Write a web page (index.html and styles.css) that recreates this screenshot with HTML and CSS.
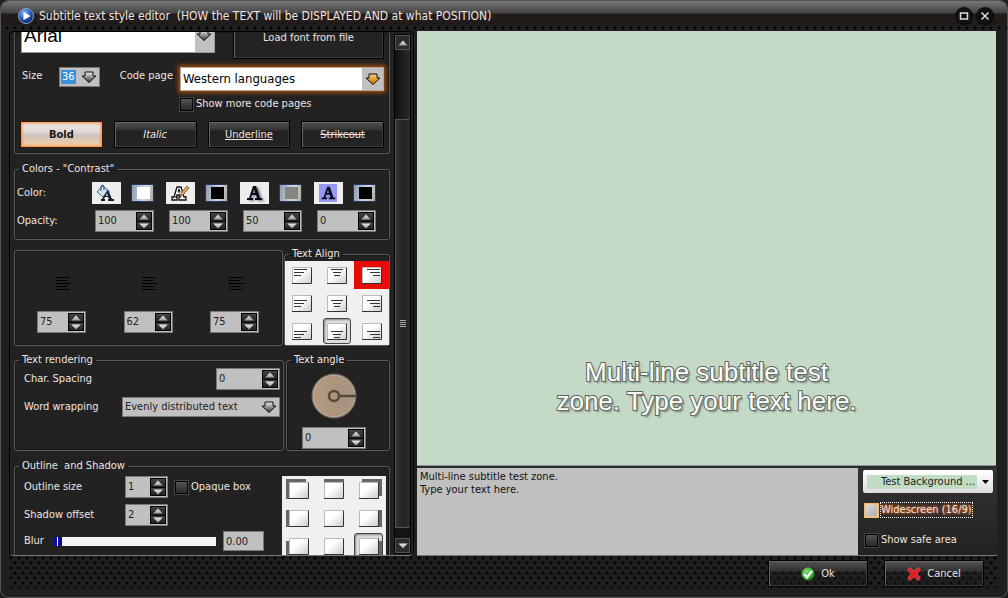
FILE: index.html
```html
<!DOCTYPE html>
<html lang="en">
<head>
<meta charset="utf-8">
<title>Subtitle text style editor</title>
<link rel="stylesheet" href="styles.css">
</head>
<body>
<svg class="defs" aria-hidden="true">
  <defs>
    <linearGradient id="gray" x1="0" y1="0" x2="0" y2="1"><stop offset="0" stop-color="#eee"/><stop offset="1" stop-color="#333"/></linearGradient>
    <linearGradient id="gold" x1="0" y1="0" x2="0" y2="1"><stop offset="0" stop-color="#ffd27a"/><stop offset="1" stop-color="#c46c00"/></linearGradient>
    <linearGradient id="paper" x1="0" y1="0" x2="1" y2="1"><stop offset="0.4" stop-color="#fff"/><stop offset="1" stop-color="#ccc"/></linearGradient>
    <linearGradient id="silver" x1="0" y1="0" x2="0" y2="1"><stop offset="0" stop-color="#eee"/><stop offset="1" stop-color="#999"/></linearGradient>
    <radialGradient id="blue" cx="0.4" cy="0.3" r="0.7"><stop offset="0" stop-color="#8fc0ff"/><stop offset="0.6" stop-color="#2456c0"/><stop offset="1" stop-color="#0a2370"/></radialGradient>
    <radialGradient id="green" cx="0.4" cy="0.3" r="0.7"><stop offset="0" stop-color="#7fe26b"/><stop offset="1" stop-color="#118a18"/></radialGradient>
  </defs>
  <symbol id="arrow" viewBox="0 0 16 12"><path d="M4 1h8v4h3L8 11.5 1 5h3z" fill="url(#gray)" stroke="#111"/></symbol>
  <symbol id="arrow-gold" viewBox="0 0 16 12"><path d="M4 1h8v4h3L8 11.5 1 5h3z" fill="url(#gold)" stroke="#111"/></symbol>
  <symbol id="tri-up" viewBox="0 0 12 7"><path d="M6 0.500L11.500 6.500H0.500z" fill="url(#silver)"/></symbol>
  <symbol id="tri-down" viewBox="0 0 12 7"><path d="M6 6.500L11.500 0.500H0.500z" fill="url(#silver)"/></symbol>
  <symbol id="page" viewBox="0 0 20 17"><path d="M0.500 16V0.500H19" fill="none" stroke="#bbb"/><rect x="1" y="1" width="18" height="15" fill="url(#paper)"/><path d="M0 16.500h19.500V0.500" fill="none" stroke="#333"/></symbol>
  <symbol id="lines-left" viewBox="0 0 14 7"><path d="M0 0.500h13M0 3.500h10M0 6.500h7" stroke="#333"/></symbol>
  <symbol id="lines-center" viewBox="0 0 14 7"><path d="M1 0.500h12M3 3.500h8M4 6.500h6" stroke="#333"/></symbol>
  <symbol id="lines-right" viewBox="0 0 14 7"><path d="M1 0.500h13M4 3.500h10M7 6.500h7" stroke="#333"/></symbol>
  <symbol id="margin" viewBox="0 0 20 16"><path d="M4 2.500h14M4 5.500h11M4 8.500h15M4 11.500h11M4 14.500h14" stroke="#000"/></symbol>
  <symbol id="fill-a" viewBox="0 0 20 18"><path d="M6 2l6 4-5 7-6-5z" fill="#d5e2ef" stroke="#456a8d"/><path d="M5 7V2q2-2 3 0v4" fill="none" stroke="#2d4d6c"/><path d="M11 5q3 1 3 4l-4-2z" fill="#5e9ad0"/><path d="M12 6l4 9h2v2h-6v-2h1l-1-2H9l-1 2h1v2H5v-2h1l4-6zM10 12h2l-1-3z" fill="#151d28" fill-rule="evenodd"/></symbol>
  <symbol id="outline-a" viewBox="0 0 20 18"><path d="M7 3h4l3 10h2v3H9v-3h1v-2H7l-1 2h1v3H2v-3h2z" fill="#fff" stroke="#111" stroke-width="1.300"/><path d="M8 8l1-3 1 3z" fill="#fff" stroke="#111"/><path d="M17 2l2 2-6 7-3 2 1-4z" fill="#dca467" stroke="#7c4925" stroke-width="0.800"/></symbol>
  <symbol id="solid-a" viewBox="0 0 20 18"><path d="M9 2h3l4 12h2v2h-7v-2h2l-1-3H8l-1 3h2v2H3v-2h2zM9 9h2l-1-4z" fill="#080818" fill-rule="evenodd"/></symbol>
</svg>

<div class="window">
  <header class="titlebar">
    <svg class="logo" viewBox="0 0 16 16"><circle cx="8" cy="8" r="7.500" fill="url(#blue)" stroke="#8ab"/><path d="M5.500 4l7 4-7 4z" fill="#fff"/></svg>
    <h1>Subtitle text style editor&nbsp; (HOW the TEXT will be DISPLAYED AND at what POSITION)</h1>
    <button class="round" aria-label="Maximize"><svg viewBox="0 0 16 16"><rect x="4.500" y="5" width="7" height="6" fill="none" stroke="#ddd" stroke-width="1.500"/></svg></button>
    <button class="round" aria-label="Close"><svg viewBox="0 0 16 16"><path d="M4.500 4.500l7 7M11.500 4.500l-7 7" stroke="#ddd" stroke-width="1.500"/></svg></button>
  </header>

  <main class="content">
    <section class="options">
      <div class="groups">
        <div class="group font-group">
          <div class="row font-row">
            <div class="select font-select"><select aria-label="Font"><option>Arial</option></select><svg><use href="#arrow"/></svg></div>
            <button class="btn load">Load font from file</button>
          </div>
          <div class="row size-row">
            <label for="size">Size</label>
            <div class="select size-select"><select id="size"><option>36</option></select><span class="picked">36</span><svg><use href="#arrow"/></svg></div>
            <label class="code-label" for="code">Code page</label>
            <div class="select code-select"><select id="code"><option>Western languages</option></select><svg><use href="#arrow-gold"/></svg></div>
          </div>
          <label class="check more-row"><input type="checkbox">Show more code pages</label>
          <div class="styles-row">
            <button class="btn bold">Bold</button>
            <button class="btn italic">Italic</button>
            <button class="btn underline">Underline</button>
            <button class="btn strike">Strikeout</button>
          </div>
        </div>

        <fieldset class="group colors">
          <legend>Colors - "Contrast"</legend>
          <div class="color-grid">
            <span>Color:</span>
            <div class="cell"><button class="tile" aria-label="Fill"><svg><use href="#fill-a"/></svg></button><button class="swatch" aria-label="Fill color"><i class="white"></i></button></div>
            <div class="cell"><button class="tile" aria-label="Outline"><svg><use href="#outline-a"/></svg></button><button class="swatch" aria-label="Outline color"><i class="black"></i></button></div>
            <div class="cell"><button class="tile shadow" aria-label="Shadow"><svg><use href="#solid-a"/></svg></button><button class="swatch" aria-label="Shadow color"><i class="mid"></i></button></div>
            <div class="cell"><button class="tile box" aria-label="Box"><svg><use href="#solid-a"/></svg></button><button class="swatch" aria-label="Box color"><i class="black"></i></button></div>
            <span>Opacity:</span>
            <div class="spin"><input aria-label="Fill opacity" value="100"><span class="steps"><button aria-label="Up"><svg><use href="#tri-up"/></svg></button><button aria-label="Down"><svg><use href="#tri-down"/></svg></button></span></div>
            <div class="spin"><input aria-label="Outline opacity" value="100"><span class="steps"><button aria-label="Up"><svg><use href="#tri-up"/></svg></button><button aria-label="Down"><svg><use href="#tri-down"/></svg></button></span></div>
            <div class="spin"><input aria-label="Shadow opacity" value="50"><span class="steps"><button aria-label="Up"><svg><use href="#tri-up"/></svg></button><button aria-label="Down"><svg><use href="#tri-down"/></svg></button></span></div>
            <div class="spin"><input aria-label="Box opacity" value="0"><span class="steps"><button aria-label="Up"><svg><use href="#tri-up"/></svg></button><button aria-label="Down"><svg><use href="#tri-down"/></svg></button></span></div>
          </div>
        </fieldset>

        <div class="pair align-pair">
          <div class="group margins">
            <div class="margin-item"><svg><use href="#margin"/></svg><div class="spin"><input aria-label="Left margin" value="75"><span class="steps"><button aria-label="Up"><svg><use href="#tri-up"/></svg></button><button aria-label="Down"><svg><use href="#tri-down"/></svg></button></span></div></div>
            <div class="margin-item"><svg><use href="#margin"/></svg><div class="spin"><input aria-label="Vertical margin" value="62"><span class="steps"><button aria-label="Up"><svg><use href="#tri-up"/></svg></button><button aria-label="Down"><svg><use href="#tri-down"/></svg></button></span></div></div>
            <div class="margin-item"><svg><use href="#margin"/></svg><div class="spin"><input aria-label="Right margin" value="75"><span class="steps"><button aria-label="Up"><svg><use href="#tri-up"/></svg></button><button aria-label="Down"><svg><use href="#tri-down"/></svg></button></span></div></div>
          </div>
          <fieldset class="group align">
            <legend>Text Align</legend>
            <div class="nine">
              <button aria-label="Top left"><svg viewBox="0 0 20 17"><use href="#page" width="20" height="17"/><use href="#lines-left" x="2" y="2" width="14" height="7"/></svg></button>
              <button aria-label="Top center"><svg viewBox="0 0 20 17"><use href="#page" width="20" height="17"/><use href="#lines-center" x="3" y="2" width="14" height="7"/></svg></button>
              <button class="hot" aria-label="Top right"><svg viewBox="0 0 20 17"><use href="#page" width="20" height="17"/><use href="#lines-right" x="4" y="2" width="14" height="7"/></svg></button>
              <button aria-label="Middle left"><svg viewBox="0 0 20 17"><use href="#page" width="20" height="17"/><use href="#lines-left" x="2" y="5" width="14" height="7"/></svg></button>
              <button aria-label="Middle center"><svg viewBox="0 0 20 17"><use href="#page" width="20" height="17"/><use href="#lines-center" x="3" y="5" width="14" height="7"/></svg></button>
              <button aria-label="Middle right"><svg viewBox="0 0 20 17"><use href="#page" width="20" height="17"/><use href="#lines-right" x="4" y="5" width="14" height="7"/></svg></button>
              <button aria-label="Bottom left"><svg viewBox="0 0 20 17"><use href="#page" width="20" height="17"/><use href="#lines-left" x="2" y="8" width="14" height="7"/></svg></button>
              <button class="pressed" aria-label="Bottom center"><svg viewBox="0 0 20 17"><use href="#page" width="20" height="17"/><use href="#lines-center" x="3" y="8" width="14" height="7"/></svg></button>
              <button aria-label="Bottom right"><svg viewBox="0 0 20 17"><use href="#page" width="20" height="17"/><use href="#lines-right" x="4" y="8" width="14" height="7"/></svg></button>
            </div>
          </fieldset>
        </div>

        <div class="pair render-pair">
          <fieldset class="group rendering">
            <legend>Text rendering</legend>
            <div class="field"><label for="spacing">Char. Spacing</label><div class="spin"><input id="spacing" value="0"><span class="steps"><button aria-label="Up"><svg><use href="#tri-up"/></svg></button><button aria-label="Down"><svg><use href="#tri-down"/></svg></button></span></div></div>
            <div class="field"><label for="wrap">Word wrapping</label><div class="select wrap-select"><select id="wrap"><option>Evenly distributed text</option></select><svg><use href="#arrow"/></svg></div></div>
          </fieldset>
          <fieldset class="group angle">
            <legend>Text angle</legend>
            <svg class="dial" viewBox="0 0 46 46"><defs><linearGradient id="tan"><stop offset="0" stop-color="#b59a80"/><stop offset="1" stop-color="#a3917f"/></linearGradient></defs><circle cx="23" cy="23" r="22" fill="url(#tan)" stroke="#77695c"/><circle cx="23" cy="23" r="20.500" fill="none" stroke="#c8b29c" stroke-width="0.600"/><circle cx="23" cy="23" r="5" fill="none" stroke="#54483d" stroke-width="2.500"/><path d="M28 23h17" stroke="#54483d" stroke-width="2.500"/></svg>
            <div class="spin"><input aria-label="Text angle" value="0"><span class="steps"><button aria-label="Up"><svg><use href="#tri-up"/></svg></button><button aria-label="Down"><svg><use href="#tri-down"/></svg></button></span></div>
          </fieldset>
        </div>

        <fieldset class="group outline">
          <legend>Outline&nbsp; and Shadow</legend>
          <div class="outline-body">
            <div class="outline-fields">
              <div class="row"><label class="wide" for="osize">Outline size</label><div class="spin"><input id="osize" value="1"><span class="steps"><button aria-label="Up"><svg><use href="#tri-up"/></svg></button><button aria-label="Down"><svg><use href="#tri-down"/></svg></button></span></div><label class="check"><input type="checkbox">Opaque box</label></div>
              <div class="row"><label class="wide" for="soff">Shadow offset</label><div class="spin"><input id="soff" value="2"><span class="steps"><button aria-label="Up"><svg><use href="#tri-up"/></svg></button><button aria-label="Down"><svg><use href="#tri-down"/></svg></button></span></div></div>
              <div class="row blur-row"><label for="blur">Blur</label><input class="slider" id="blur" type="range" min="0" max="10" value="0"><input class="amount" aria-label="Blur amount" value="0.00"></div>
            </div>
            <div class="nine shadow-grid">
              <button aria-label="Shadow top left"><svg viewBox="-3 -3 26 23"><path d="M-3-3h20v4H0v16h-3z" fill="#666"/><use href="#page" width="20" height="17"/></svg></button>
              <button aria-label="Shadow top"><svg viewBox="-3 -3 26 23"><path d="M0-3h20v5H0z" fill="#666"/><use href="#page" width="20" height="17"/></svg></button>
              <button aria-label="Shadow top right"><svg viewBox="-3 -3 26 23"><path d="M3-3h20v17h-4V1H3z" fill="#666"/><use href="#page" width="20" height="17"/></svg></button>
              <button aria-label="Shadow left"><svg viewBox="-3 -3 26 23"><path d="M-3 0h4v17h-4z" fill="#666"/><use href="#page" width="20" height="17"/></svg></button>
              <button aria-label="No shadow"><svg viewBox="-3 -3 26 23"><use href="#page" width="20" height="17"/></svg></button>
              <button aria-label="Shadow right"><svg viewBox="-3 -3 26 23"><path d="M19 0h4v17h-4z" fill="#666"/><use href="#page" width="20" height="17"/></svg></button>
              <button aria-label="Shadow bottom left"><svg viewBox="-3 -3 26 23"><path d="M-3 3h4v13h16v4H-3z" fill="#666"/><use href="#page" width="20" height="17"/></svg></button>
              <button aria-label="Shadow bottom"><svg viewBox="-3 -3 26 23"><path d="M0 16h20v4H0z" fill="#666"/><use href="#page" width="20" height="17"/></svg></button>
              <button class="pressed" aria-label="Shadow bottom right"><svg viewBox="-3 -3 26 23"><path d="M19 3h4v17H3v-4h16z" fill="#666"/><use href="#page" width="20" height="17"/></svg></button>
            </div>
          </div>
        </fieldset>
      </div>
      <div class="scrollbar">
        <button aria-label="Scroll up"><svg><use href="#tri-up"/></svg></button>
        <span class="track"></span>
        <span class="thumb"><i></i></span>
        <button aria-label="Scroll down"><svg><use href="#tri-down"/></svg></button>
      </div>
    </section>

    <section class="preview">
      <div class="screen"><p>Multi-line subtitle test<br>zone. Type your text here.</p></div>
      <div class="lower">
        <textarea aria-label="Subtitle text">Multi-line subtitle test zone.
Type your text here.</textarea>
        <div class="side">
          <button class="background"><span>Test Background ...</span><svg viewBox="0 0 7 4"><path d="M0 0h7L3.500 4z" fill="#000"/></svg></button>
          <label class="check wide-check"><input type="checkbox"><span>Widescreen (16/9)</span></label>
          <label class="check"><input type="checkbox">Show safe area</label>
        </div>
      </div>
    </section>
  </main>

  <footer class="footer">
    <button class="btn action"><svg viewBox="0 0 14 14"><circle cx="7" cy="7" r="6.500" fill="url(#green)"/><path d="M3 7l3 3.500L11 4" fill="none" stroke="#fff" stroke-width="2.200"/></svg>Ok</button>
    <button class="btn action"><svg viewBox="0 0 14 14"><path d="M3 0.500l4 3.800 4-3.800 2.500 2.300L10 7l3.500 4.200-2.500 2.300-4-3.800-4 3.800-2.500-2.300L4 7 0.500 2.800z" fill="#df1f1f" stroke="#f06060" stroke-width="0.700"/></svg>Cancel</button>
  </footer>
</div>
</body>
</html>
```
FILE: styles.css
```css
* { box-sizing: border-box; }
body {
  margin: 0;
  background: #222;
  color: #f0e4e0;
  font: 11px/14px "DejaVu Sans Condensed", "DejaVu Sans", sans-serif;
}
button, input, select, textarea { font: inherit; color: inherit; margin: 0; padding: 0; border: 0; border-radius: 0; }
.defs { position: absolute; width: 0; height: 0; }
svg { display: block; }

.window {
  display: flex;
  flex-direction: column;
  min-height: 100vh;
  padding: 0 10px 9px 8px;
  border: 1px solid #555;
  border-radius: 9px;
  background: #1f1f1f;
}

.titlebar, .footer {
  background-image:
    radial-gradient(circle at 2px 2px, #030303 1px, transparent 2px),
    radial-gradient(circle at 6px 7px, #030303 1px, transparent 2px);
  background-size: 8px 10px;
}
.titlebar {
  display: flex;
  align-items: center;
  gap: 5px;
  height: 30px;
  margin: 0 -10px 0 -8px;
  padding: 0 14px 0 17px;
  border-radius: 8px 8px 0 0;
  background-image:
    linear-gradient(#777, #444 12px, #221c1b 13px, #221c1b 22px, transparent 23px),
    radial-gradient(circle at 2px 2px, #030303 1px, transparent 2px),
    radial-gradient(circle at 6px 7px, #030303 1px, transparent 2px);
  background-size: 100% 100%, 8px 10px, 8px 10px;
}
.titlebar h1 { flex: 1; margin: 0; font-size: 12px; font-weight: normal; line-height: 16px; white-space: nowrap; }
.logo { width: 16px; height: 16px; }
.round { width: 16px; height: 16px; border-radius: 50%; background: #111; box-shadow: 0 0 1px 1px #080808; }

.content { flex: 1; display: flex; gap: 3px; min-height: 0; }
.options {
  display: flex;
  gap: 4px;
  width: 405px;
  height: 525px;
  flex: none;
  padding: 0 2px 0 4px;
  border: 1px solid #000;
  border-bottom-color: #777;
  border-radius: 5px;
  background: #222;
  overflow: hidden;
}
.groups { flex: none; width: 376px; overflow: hidden; }
.group {
  min-width: 0;
  margin: 0;
  padding: 0;
  border: 1px solid #5b5b5b;
  border-radius: 3px;
  box-shadow: inset 0 0 0 1px #171717;
}
legend { margin-left: 4px; padding: 0 3px; line-height: 14px; }
.row { display: flex; align-items: center; }

.btn {
  border: 1px solid #000;
  background: linear-gradient(#525252, #333 8px, #222 9px, #242424);
  box-shadow: inset 1px 1px #666, inset -1px -1px #3a3a3a;
}
.select { position: relative; border: 1px solid #777; background: #c0c0c0; color: #222; }
.select select { display: block; width: 100%; height: 100%; padding: 0 0 0 2px; appearance: none; background: transparent; outline: 0; }
.select svg { position: absolute; right: 2px; top: 50%; width: 16px; height: 12px; margin-top: -6px; pointer-events: none; }

.font-group { display: flow-root; height: 122px; padding: 0 5px 0 6px; border-top: 0; }
.font-row { align-items: flex-start; justify-content: space-between; margin-top: -15px; height: 42px; }
.font-select { width: 194px; height: 36px; border: 1px solid #999; background: linear-gradient(90deg, #fff 173px, #c0c0c0 173px); }
.font-select select { font: 19px "Liberation Sans", Arial, sans-serif; color: #000; }
.load { width: 151px; height: 42px; }
.size-row { align-items: flex-start; height: 24px; margin-top: 8px; }
.size-row > label { width: 38px; padding-left: 1px; line-height: 18px; }
.size-select { width: 41px; height: 20px; }
.picked { position: absolute; left: 1px; top: 2px; padding: 0 1px; background: #3b8fdb; color: #fff; }
.size-row > .code-label { width: auto; margin-left: auto; margin-right: 7px; }
.code-select { width: 204px; height: 24px; border: 1px solid #c0a898; background: linear-gradient(90deg, #fff 181px, #c0c0c0 181px); box-shadow: 0 0 4px 2px #9a4a10; }
.code-select select { font-size: 13px; color: #000; }
.check { display: flex; align-items: center; gap: 3px; }
.check input { appearance: none; width: 13px; height: 13px; border: 1px solid #000; background: linear-gradient(#555, #282828); box-shadow: 0 0 0 1px #444; }
.more-row { margin: 6px 0 0 159px; }
.styles-row { display: grid; grid-template-columns: 1fr 1fr 1fr 1fr; gap: 11px; margin-top: 10px; margin-left: -1px; }
.styles-row .btn { height: 27px; }
.styles-row .bold { border-color: #3a1800; background: linear-gradient(#ece4e0, #e2dad6 10px, #cdc2bc 13px, #f8cfa4); box-shadow: inset 0 0 3px 1px #f28a3c; color: #1d1714; font-weight: bold; }
.italic { font-style: italic; }
.underline { text-decoration: underline; }
.strike { text-decoration: line-through; }

.colors { height: 78px; margin-top: 8px; }
.color-grid { display: grid; grid-template-columns: 78px 74px 74px 74px 58px; row-gap: 6px; align-items: center; padding: 6px 0 0 2px; }
.cell { display: flex; align-items: center; gap: 10px; margin-left: -3px; }
.tile { flex: none; width: 29px; height: 22px; padding: 2px 4px; background: #eee; }
.tile svg { width: 20px; height: 18px; }
.shadow svg { filter: drop-shadow(2px 1px 1px #777); }
.box { padding: 2px 5px; }
.box svg { width: 18px; background: #9696f4; }
.swatch { flex: none; width: 23px; height: 18px; padding: 2px 3px 2px 5px; border: 1px solid #22386c; background: linear-gradient(100deg, #8c9bb4, #d8d8d8 60%, #a9aa9c); }
.swatch i { display: block; height: 12px; }
.white { background: #fff; }
.black { background: #000; }
.mid { background: #85857f; }

.spin { display: flex; align-items: center; width: 59px; height: 22px; border: 1px solid #777; background: #c0c0c0; color: #222; padding-right: 1px; }
.spin input { flex: 1; min-width: 0; height: 18px; padding: 0 0 1px 2px; background: transparent; }
.steps { display: flex; flex-direction: column; width: 16px; height: 18px; border: 1px solid #000; background: #000; gap: 1px; }
.steps button { flex: 1; min-height: 0; padding: 1px; background: linear-gradient(#444, #222); }
.steps svg { width: 12px; height: 6px; }

.pair { display: grid; }
.align-pair { grid-template-columns: 269px 106px; gap: 1px; margin-top: 7px; }
.margins { display: flex; align-items: flex-end; justify-content: space-between; height: 96px; margin-top: 3px; padding: 0 23px 12px 22px; }
.margin-item { display: flex; flex-direction: column; align-items: center; gap: 20px; }
.margin-item > svg { width: 20px; height: 16px; }
.margin-item .spin { width: 49px; }
.align { height: 99px; }
.nine { display: grid; grid-template-columns: repeat(3, 1fr); grid-template-rows: repeat(3, 1fr); height: 84px; background: #f0f0f0; }
.nine button { display: flex; align-items: center; justify-content: center; background: none; }
.nine svg { width: 20px; height: 17px; }
.nine .hot { background: #e80c08; }
.nine .pressed { margin: 1px 3px; border: 1px solid #444; border-radius: 3px; background: #ddd; box-shadow: inset 1px 1px 2px #888; }

.render-pair { grid-template-columns: 270px 104px; gap: 2px; margin-top: 7px; }
.rendering, .angle { height: 98px; }
.field { display: flex; align-items: center; justify-content: space-between; height: 20px; margin: 2px 3px 8px 9px; }
.field .spin { width: 64px; }
.wrap-select { width: 158px; height: 20px; }
.dial { width: 46px; height: 46px; margin: 6px 0 0 24px; }
.angle .spin { width: 64px; margin: 8px 0 0 15px; }

.outline { height: 120px; margin-top: 8px; }
.outline-body { display: flex; justify-content: space-between; padding: 3px 3px 0 9px; }
.outline-fields { display: flex; flex-direction: column; gap: 6px; }
.wide { width: 101px; }
.outline .spin { width: 43px; }
.outline .check { margin-left: 7px; }
.blur-row { gap: 10px; height: 20px; margin-top: -1px; }
.slider { appearance: none; width: 162px; height: 9px; margin-right: -3px; background: #f4f4f4; }
.blur-row label { width: 20px; }
.slider::-webkit-slider-thumb { appearance: none; width: 8px; height: 9px; background: linear-gradient(90deg, #0808a0 3px, #fff 3px, #fff 4px, #0808a0 4px); }
.blur-row .amount { width: 41px; height: 20px; padding-left: 2px; border: 1px solid #777; background: #c0c0c0; color: #222; }
.shadow-grid { width: 104px; height: 84px; }
.shadow-grid svg { width: 26px; height: 23px; }

.scrollbar { display: flex; flex-direction: column; width: 17px; height: 520px; margin-top: 2px; border: 1px solid #000; background: #151515; }
.scrollbar button { display: flex; align-items: center; justify-content: center; height: 15px; border: 1px solid #555; background: #2c2c2c; }
.scrollbar svg { width: 10px; height: 6px; }
.track { height: 69px; background: linear-gradient(90deg, #111, #2a2a2a); }
.thumb { flex: 1; display: flex; align-items: center; justify-content: center; margin-bottom: 10px; border: 1px solid #555; border-right-color: #222; background: linear-gradient(90deg, #333, #222 8px, #2d2d2d); }
.thumb i { width: 6px; height: 8px; background: repeating-linear-gradient(#aaa 0, #aaa 1px, transparent 1px, transparent 2px); }

.preview { flex: 1; display: flex; flex-direction: column; min-width: 0; border-bottom: 1px solid #777; }
.screen { flex: 1; display: flex; align-items: flex-end; justify-content: center; margin-right: 1px; background: #c5d9c7; border-bottom: 1px solid #8a958b; }
.screen p {
  margin: 0 0 49px;
  font: 26px/29px "Liberation Sans", Arial, sans-serif;
  color: #fff;
  text-align: center;
  -webkit-text-stroke: 2px #59655b;
  paint-order: stroke fill;
  text-shadow: 2px 2px 2px #6d786f;
}
.lower { display: flex; height: 89px; padding-top: 2px; background: #2a2a2a; }
.lower textarea { flex: 1; padding: 2px 3px; resize: none; background: #c0c0c0; color: #111; line-height: 13px; outline: 0; }
.side { width: 139px; padding: 2px 4px 0 5px; border-radius: 0 0 5px 0; background: linear-gradient(#333, #222); }
.background { display: flex; align-items: center; justify-content: space-between; width: 100%; height: 23px; padding: 0 4px; border-radius: 2px; background: linear-gradient(#fff, #ddd); color: #222; }
.background span { padding: 0 2px 0 14px; background: #c0dcc4; white-space: nowrap; }
.background svg { width: 7px; height: 4px; }
.side .check { margin: 15px 0 0 2px; }
.side .wide-check { margin-top: 9px; gap: 2px; }
.wide-check input { border-color: #f3c888; background: linear-gradient(135deg, #ddd, #aaa); box-shadow: 0 0 0 1px #edb878; }
.wide-check span { border: 1px dotted #fff; text-shadow: 0 0 4px #ff7020, 0 0 3px #e06020; white-space: nowrap; }

.footer { display: flex; justify-content: flex-end; gap: 16px; height: 32px; padding: 4px 13px 1px 0; }
.action { display: flex; align-items: center; justify-content: center; gap: 6px; width: 100px; background: linear-gradient(rgba(90, 90, 90, 0.9), rgba(55, 55, 55, 0.8) 10px, rgba(30, 30, 30, 0.4) 11px); }
.action svg { width: 14px; height: 14px; }
```
